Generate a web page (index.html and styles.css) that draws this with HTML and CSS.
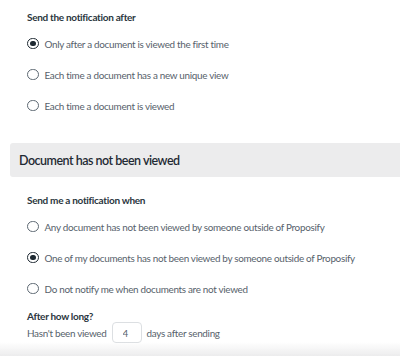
FILE: index.html
```html
<!DOCTYPE html>
<html lang="en">
<head>
    <meta charset="UTF-8">
    <meta name="viewport" content="width=device-width, initial-scale=1.0">
    <title>Notification settings</title>
    <link rel="stylesheet" href="styles.css">
</head>
<body>
    <div class="section">
        <h3 class="label">Send the notification after</h3>
        <label class="radio-row"><span class="radio checked"></span>Only after a document is viewed the first time</label>
        <label class="radio-row"><span class="radio"></span>Each time a document has a new unique view</label>
        <label class="radio-row"><span class="radio"></span>Each time a document is viewed</label>
    </div>

    <div class="band">
        <h2>Document has not been viewed</h2>
    </div>

    <div class="section second">
        <h3 class="label">Send me a notification when</h3>
        <label class="radio-row"><span class="radio"></span>Any document has not been viewed by someone outside of Proposify</label>
        <label class="radio-row"><span class="radio checked"></span>One of my documents has not been viewed by someone outside of Proposify</label>
        <label class="radio-row"><span class="radio"></span>Do not notify me when documents are not viewed</label>

        <h3 class="label small">After how long?</h3>
        <div class="days-row">
            Hasn't been viewed
            <input type="text" class="days-input" value="4">
            days after sending
        </div>
    </div>

    <div class="bottom-shade"></div>
</body>
</html>
```

FILE: styles.css
```css
body {
    font-family: Lato, "Noto Sans", sans-serif;
    margin: 0;
    padding: 0;
    background-color: #fff;
    color: #56616b;
    font-size: 9.9px;
    letter-spacing: -0.3px;
}
.section {
    padding: 10px 27px 0 27px;
}
.section.second {
    padding-top: 16px;
}
.label {
    margin: 0 0 4px 0;
    font-size: 10px;
    font-weight: bold;
    line-height: 14px;
    color: #2b3640;
}
.label.small {
    margin: 6px 0 0 0;
    line-height: 12px;
}
.radio-row {
    display: flex;
    align-items: center;
    height: 31px;
    white-space: nowrap;
    cursor: pointer;
}
.radio {
    box-sizing: border-box;
    width: 11.5px;
    height: 11.5px;
    margin-right: 6px;
    border: 1.2px solid #5d6872;
    border-radius: 50%;
    flex-shrink: 0;
    display: flex;
    align-items: center;
    justify-content: center;
}
.radio.checked {
    border: 1.5px solid #1e2932;
}
.radio.checked::after {
    content: "";
    width: 5.5px;
    height: 5.5px;
    border-radius: 50%;
    background-color: #1e2932;
}
.band {
    margin: 22px 0 0 10px;
    height: 34px;
    background-color: #ececed;
    border-radius: 3px 0 0 3px;
    display: flex;
    align-items: center;
    padding-left: 9px;
}
.band h2 {
    margin: 0;
    font-size: 12.5px;
    font-weight: 600;
    letter-spacing: -0.5px;
    color: #1f2a33;
}
.days-row {
    display: flex;
    align-items: center;
    height: 21px;
}
.days-input {
    box-sizing: border-box;
    width: 30px;
    height: 21px;
    margin: 0 5px;
    padding: 0 0 0 10px;
    border: 1px solid #dcdfe2;
    border-radius: 4px;
    font-family: inherit;
    font-size: 9.9px;
    color: #56616b;
    outline: none;
}
.bottom-shade {
    position: fixed;
    left: 0;
    right: 0;
    bottom: 0;
    height: 14px;
    background: linear-gradient(to bottom, rgba(236, 236, 237, 0), #ececed);
}
```
